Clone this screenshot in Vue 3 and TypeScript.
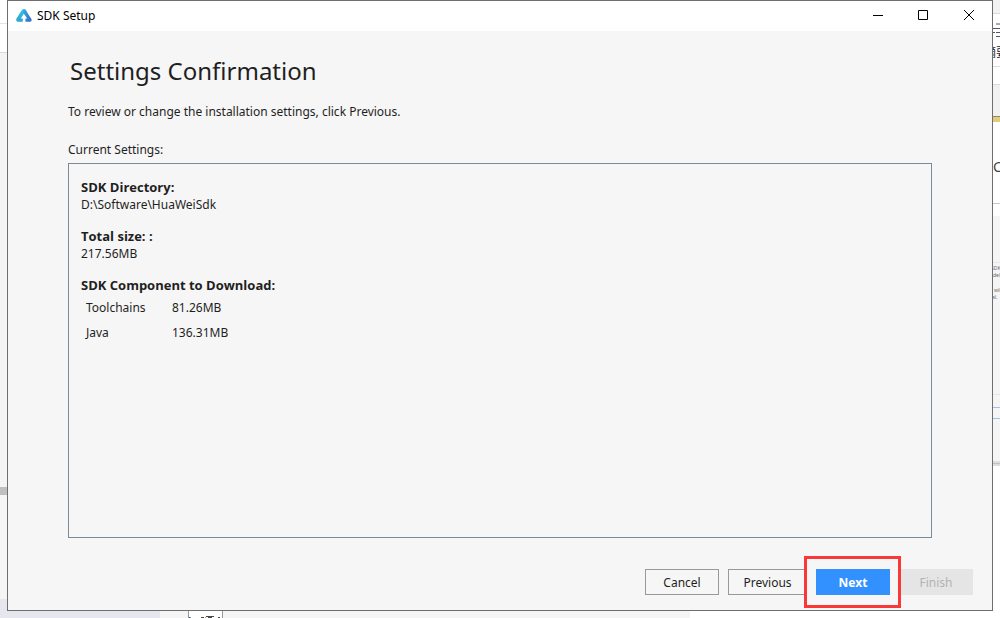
<script setup lang="ts">
interface Component {
  name: string
  size: string
}

const sdkDirectory = 'D:\\Software\\HuaWeiSdk'
const totalSize = '217.56MB'
const components: Component[] = [
  { name: 'Toolchains', size: '81.26MB' },
  { name: 'Java', size: '136.31MB' },
]
</script>

<template>
  <div class="desktop">
    <div class="edge edge-left" aria-hidden="true"></div>

    <main class="window">
      <header class="titlebar">
        <svg class="logo" viewBox="0 0 16 14" aria-hidden="true">
          <defs>
            <linearGradient id="logo-left" x1="0" y1="0" x2="0" y2="1">
              <stop offset="0" stop-color="#35c5e0" />
              <stop offset="1" stop-color="#2aa5cf" />
            </linearGradient>
            <linearGradient id="logo-right" x1="0" y1="0" x2="1" y2="1">
              <stop offset="0" stop-color="#2fb4e2" />
              <stop offset="1" stop-color="#3565cc" />
            </linearGradient>
          </defs>
          <path d="M6.5 .6Q8 -.5 9.5 .6L11.4 3.8 9.2 6.4 8 4.6 4.8 9.6H6.8V12.8H2Q-.6 12.4 .5 9.6L5.4 1.8Z" fill="url(#logo-left)" />
          <path d="M7.2 .3Q8.6 -.1 9.6 .9L15.4 10Q16.3 12.4 14 12.8H9.4V9.6H11.2L7 3.2Z" fill="url(#logo-right)" />
        </svg>
        <span class="title">SDK Setup</span>
        <div class="controls">
          <button type="button" aria-label="Minimize">
            <svg viewBox="0 0 12 12"><path d="M2 5.5H12" /></svg>
          </button>
          <button type="button" aria-label="Maximize">
            <svg viewBox="0 0 12 12"><path d="M1.5 .5H10.5V9.5H1.5Z" /></svg>
          </button>
          <button type="button" aria-label="Close">
            <svg viewBox="0 0 12 12"><path d="M1 0L11 10M11 0L1 10" /></svg>
          </button>
        </div>
      </header>

      <section class="content">
        <h1>Settings Confirmation</h1>
        <p class="intro">To review or change the installation settings, click Previous.</p>
        <h2 id="settings-label">Current Settings:</h2>
        <div class="panel" role="region" aria-labelledby="settings-label">
          <dl>
            <dt>SDK Directory:</dt>
            <dd>{{ sdkDirectory }}</dd>
            <dt>Total size: :</dt>
            <dd>{{ totalSize }}</dd>
          </dl>
          <table>
            <caption>SDK Component to Download:</caption>
            <tbody>
              <tr v-for="c in components" :key="c.name">
                <td>{{ c.name }}</td>
                <td>{{ c.size }}</td>
              </tr>
            </tbody>
          </table>
        </div>
      </section>

      <footer class="actions">
        <button type="button">Cancel</button>
        <button type="button" class="previous">Previous</button>
        <div class="highlighted">
          <button type="button" class="primary">Next</button>
        </div>
        <button type="button" disabled>Finish</button>
      </footer>
    </main>

    <div class="edge edge-right" aria-hidden="true">
      <svg viewBox="0 0 7 610" preserveAspectRatio="xMinYMin slice">
        <rect width="7" height="610" fill="#fff" />
        <rect width="7" height="13" fill="#f2f2f2" />
        <path d="M0 13.5H7M0 66.5H7M0 84.5H7" stroke="#dadada" />
        <path d="M3 24H7M0 28.5H7M0 32.5H2M3 32.5H7M3 36.5H7" stroke="#55556a" />
        <rect y="85" width="7" height="31" fill="#f1f1f1" />
        <path d="M0 116.5H7" stroke="#8f8769" />
        <rect y="117" width="7" height="5" fill="#e2cc7c" />
        <path d="M0 203.5H7" stroke="#c8c8c8" />
        <rect y="216" width="7" height="245" fill="#f5f5f5" />
        <path d="M0 262.5H7M0 394.5H7" stroke="#e6e6e6" />
        <path d="M0 407.5H7" stroke="#a9bfe4" />
        <path d="M0 418.5H7" stroke="#a0c3ec" />
        <rect y="461" width="7" height="5" fill="#dedede" />
        <path d="M0 463.5H7" stroke="#c2c2c2" />
        <text x="-9" y="57" class="glyph cjk">摘要</text>
        <text x="0" y="172" class="glyph">C</text>
        <text x="-2" y="270" class="tiny">SDK</text>
        <text x="0" y="277" class="tiny">del</text>
        <text x="1" y="292" class="tiny">wil</text>
        <text x="-1" y="299" class="tiny">al.</text>
      </svg>
    </div>

    <div class="edge-bottom" aria-hidden="true">
      <div class="taskbar"></div>
      <div class="strip">
        <div class="tab">
          <svg viewBox="0 0 33 7">
            <path d="M0 6.5H1M12 6.5H15M17 5.5H25M19 6.5H23M29 6.5H31" stroke="#4a4a4a" />
            <path d="M1 6.5H2" stroke="#5b9fe0" />
            <path d="M16 6.5H17" stroke="#d79a55" />
          </svg>
        </div>
      </div>
    </div>
  </div>
</template>

<style>
body {
  margin: 0;
}
</style>

<style scoped>
.desktop {
  display: grid;
  grid-template-columns: 7px minmax(0, 1fr) 7px;
  grid-template-rows: minmax(0, 1fr) 7px;
  min-height: 100vh;
  background: #fff;
  font-family: "Noto Sans", "Noto Sans CJK SC", sans-serif;
  font-size: 12px;
  line-height: 17px;
  color: #1f1f1f;
}

.edge-left {
  background: linear-gradient(#fff 23px, #e4e4e4 23px 24px, #fff 24px 52px, #dadada 52px 53px, #f4f4f4 53px 487px, #bfbfbf 487px 495px, #f5f5f5 495px 599px, #e6e6ee 599px);
}

.edge-right {
  overflow: hidden;
}

.edge-right svg {
  display: block;
  width: 7px;
  height: 610px;
}

.glyph {
  font-size: 14px;
  fill: #444;
}

.cjk {
  font-family: "Noto Sans CJK SC", sans-serif;
  font-size: 12px;
  fill: #223;
}

.tiny {
  font-size: 5px;
  fill: #666;
}

.edge-bottom {
  grid-column: 1 / -1;
  display: flex;
}

.taskbar {
  width: 16%;
  background: #e6e6ee;
}

.strip {
  width: 53%;
  padding-left: 28px;
  box-sizing: border-box;
  background: #f5f5f5;
}

.tab {
  width: 33px;
  height: 7px;
  background: #fff;
  border: solid #999;
  border-width: 0 1px;
}

.tab svg {
  display: block;
}

.window {
  display: flex;
  flex-direction: column;
  background: #f6f6f6;
  border: 1px solid #6e6e6e;
}

.titlebar {
  display: flex;
  align-items: center;
  height: 30px;
  padding-left: 8px;
  background: #fff;
  color: #000;
}

.logo {
  width: 16px;
  height: 14px;
  margin-right: 5px;
}

.title {
  padding-bottom: 2px;
}

.controls {
  display: flex;
  margin-left: auto;
}

.controls button {
  display: grid;
  place-items: center;
  width: 46px;
  height: 30px;
  padding: 0;
  border: 0;
  background: none;
}

.controls svg {
  width: 12px;
  height: 12px;
  fill: none;
  stroke: #000;
}

.content {
  flex: 1;
  display: flex;
  flex-direction: column;
  padding: 24px 60px 0;
}

h1 {
  margin: 0 0 16px 2px;
  font-size: 24px;
  line-height: 32px;
  font-weight: 400;
}

.intro {
  margin: 0 0 21px;
}

h2 {
  margin: 0 0 5px;
  font-size: 12px;
  line-height: 17px;
  font-weight: 400;
}

.panel {
  flex: 1;
  padding: 15px 12px;
  border: 1px solid #7a8a99;
}

dl,
dd {
  margin: 0;
}

dd {
  margin-bottom: 15px;
}

dt,
caption {
  font-family: "Open Sans", sans-serif;
  font-size: 13px;
  font-weight: 700;
  text-align: left;
}

caption {
  padding-bottom: 1px;
}

table {
  width: 100%;
  table-layout: fixed;
  border-collapse: collapse;
}

td {
  height: 25px;
  padding: 0;
}

td:first-child {
  width: 86px;
  padding-left: 5px;
}

.actions {
  display: flex;
  justify-content: flex-end;
  gap: 9px;
  padding: 31px 19px 15px;
}

.actions button {
  width: 74px;
  height: 26px;
  padding: 0;
  border: 1px solid #999;
  background: #f6f6f6;
  font: inherit;
  color: inherit;
}

.actions .previous {
  width: 79px;
}

.actions .primary {
  border-color: #3391ff;
  background: #3391ff;
  color: #fff;
  font-weight: 700;
}

.actions button:disabled {
  border-color: #e5e5e5;
  background: #e5e5e5;
  color: #b3b3b3;
}

.highlighted {
  position: relative;
}

.highlighted::after {
  content: "";
  position: absolute;
  inset: -13px -11px -13px -12px;
  border: 3px solid #fb3838;
  pointer-events: none;
}
</style>
